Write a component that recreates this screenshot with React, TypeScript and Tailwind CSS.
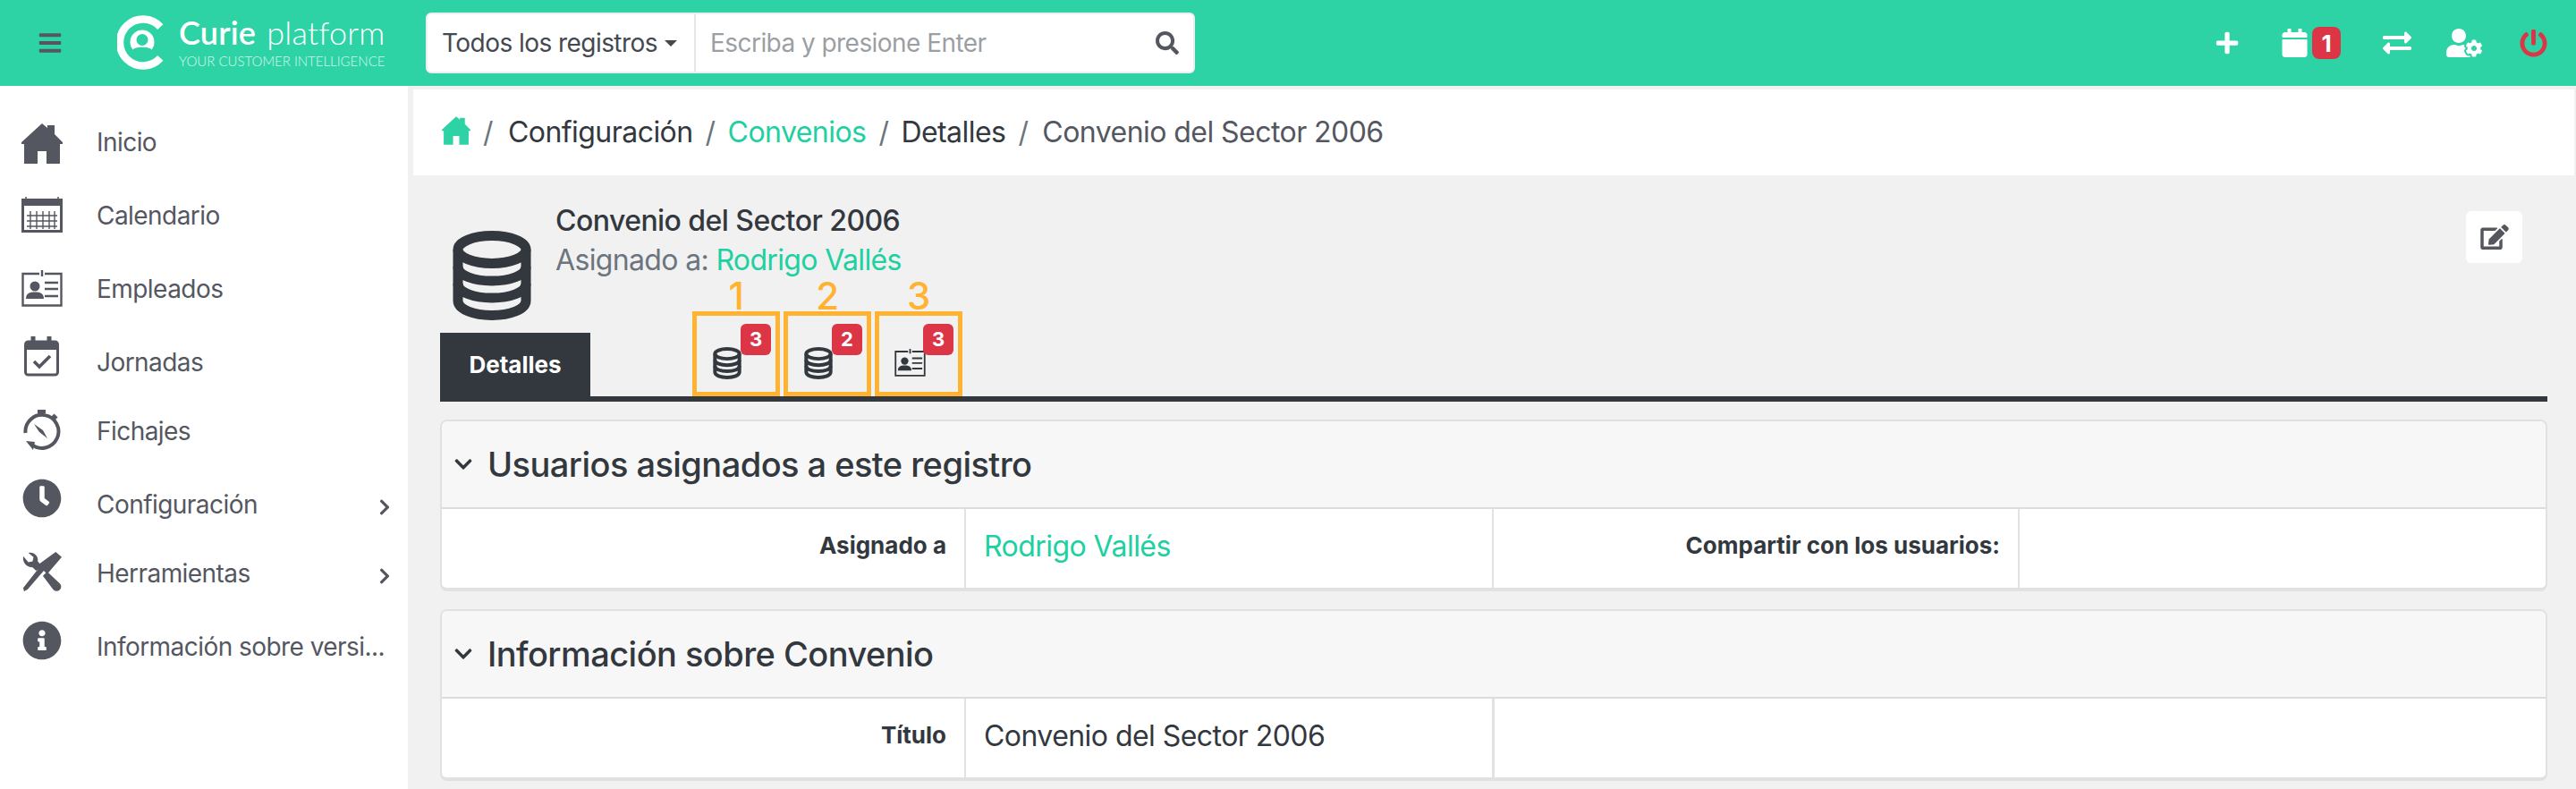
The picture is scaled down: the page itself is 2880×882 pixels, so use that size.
import { FaBars, FaChevronDown, FaChevronRight, FaClock, FaEdit, FaExchangeAlt, FaInfoCircle, FaPlus, FaPowerOff, FaSearch, FaUserCog, FaCalendar } from 'react-icons/fa'
import type { ReactNode } from 'react'

function HomeIcon({ className }: { className?: string }) {
  return (
    <svg viewBox="0 0 46 45" className={className} fill="currentColor">
      <path d="M23 0 L29 5 V2 H37 V12 L46 21 V23 H43 V45 H28 V31 H18 V45 H3 V23 H0 V21 Z" />
    </svg>
  )
}

function CalendarGridIcon({ className }: { className?: string }) {
  return (
    <svg viewBox="0 0 46 40" className={className} fill="none" stroke="currentColor">
      <rect x="1.5" y="3.5" width="43" height="35" strokeWidth="3" />
      <rect x="1" y="3" width="44" height="7" fill="currentColor" stroke="none" />
      <path d="M5 0 V4 M41 0 V4" strokeWidth="1.5" />
      <path d="M6 21 H40 M6 27 H40 M6 33 H40 M10 16 V36 M17 16 V36 M24 16 V36 M31 16 V36 M37 16 V36" strokeWidth="1.4" />
    </svg>
  )
}

function IdCardIcon({ className }: { className?: string }) {
  return (
    <svg viewBox="0 0 46 41" className={className} fill="none" stroke="currentColor">
      <path d="M20 4 H1.5 V39.5 H44.5 V4 H26" strokeWidth="2.4" />
      <path d="M23 0 V7" strokeWidth="2.4" />
      <circle cx="15" cy="18" r="5.5" fill="currentColor" stroke="none" />
      <path d="M5 32 C5 26 9 24.5 15 24.5 C21 24.5 25 26 25 32 Z" fill="currentColor" stroke="none" />
      <path d="M26 14 H41 M26 21 H41 M26 29 H41" strokeWidth="2.6" />
    </svg>
  )
}

function JornadaIcon({ className }: { className?: string }) {
  return (
    <svg viewBox="0 0 40 45" className={className} fill="none" stroke="currentColor">
      <rect x="1.5" y="6" width="36" height="37" rx="3" strokeWidth="3" />
      <path d="M1 7 H38 V15 H1 Z" fill="currentColor" stroke="none" />
      <path d="M10 0 V7 M28 0 V7" strokeWidth="5" />
      <path d="M11 28 L17 34 L29 22" strokeWidth="3.6" />
    </svg>
  )
}

function StopwatchIcon({ className }: { className?: string }) {
  return (
    <svg viewBox="0 0 42 47" className={className} fill="none" stroke="currentColor">
      <path d="M16 2 H25 M20.5 2 V6" strokeWidth="4" />
      <path d="M33 6 L37 10" strokeWidth="4.5" />
      <path d="M2.5 26 A18.5 18.5 0 1 1 9 38.5" strokeWidth="4" />
      <path d="M3 35 L13 36 L11 45 Z" fill="currentColor" stroke="none" />
      <path d="M12 16 L22 23 L27 32 L18 25 Z" fill="currentColor" stroke="none" />
    </svg>
  )
}

function ToolsIcon({ className }: { className?: string }) {
  return (
    <svg viewBox="0 0 46 46" className={className} fill="currentColor">
      <path d="M1 5 C0 13 5 18 12 18 L16 22 L23 17 L18 11 C19 5 14 0 7 1 L13 6 L12 11 L7 12 Z" />
      <path d="M39 0 L46 6 L29 26 L25 22 L6 44 L2 46 L1 42 L19 19 L17 16 Z" />
      <path d="M24 28 L29 23 L44 37 A5 5 0 0 1 36 44 Z" />
    </svg>
  )
}

function DatabaseIcon({ className }: { className?: string }) {
  return (
    <svg viewBox="0 0 88 100" className={className} fill="none" stroke="currentColor" strokeWidth="11">
      <ellipse cx="44" cy="21" rx="38" ry="15.5" />
      <path d="M6 21 V78 C6 88 24 94.5 44 94.5 C64 94.5 82 88 82 78 V21" />
      <path d="M6 40 C6 50 24 56 44 56 C64 56 82 50 82 40" />
      <path d="M6 59 C6 69 24 75 44 75 C64 75 82 69 82 59" />
    </svg>
  )
}

function CurieMark() {
  return (
    <svg viewBox="0 0 58 62" className="w-[58px] h-[62px]" fill="none">
      <path d="M48.3 13.1 A26 26 0 1 0 48.3 47.9" stroke="#fff" strokeWidth="8.5" />
      <circle cx="28" cy="30" r="13.5" fill="#fff" />
      <circle cx="28" cy="27.5" r="6.5" fill="#2dd3a5" />
      <path d="M15 45 L18 38 C21 35 35 35 38 38 L41 45 Z" fill="#2dd3a5" />
    </svg>
  )
}

function NavItem({ icon, label, className, iconClass, chevron }: { icon: ReactNode; label: string; className: string; iconClass?: string; chevron?: boolean }) {
  return (
    <div className={`h-[72px] flex items-center pl-6 pr-[19px] ${className}`}>
      <div className={`w-[46px] flex justify-center shrink-0 text-[#54575f] ${iconClass ?? ''}`}>{icon}</div>
      <span className="ml-[38px] text-[28px] text-[#54575f] whitespace-nowrap">{label}</span>
      {chevron && <FaChevronRight className="ml-auto mt-[5px] text-[#54575f] w-[14px] h-[20px]" />}
    </div>
  )
}

function TabBox({ num, count, icon }: { num: string; count: string; icon: ReactNode }) {
  return (
    <div className="relative w-[98px] h-[95px] border-[5px] border-[#ffb330]">
      <span className="absolute -top-[47px] inset-x-0 text-center text-[42px] leading-[50px] font-medium text-[#ffb330]">{num}</span>
      <div className="absolute left-[18px] top-[35px] text-[#32383e]">{icon}</div>
      <span className="absolute right-[5px] top-[9px] w-[34px] h-[35px] rounded-[6px] bg-[#dc3545] text-white text-[22px] tracking-normal font-bold flex items-center justify-center">{count}</span>
    </div>
  )
}

function Panel({ title, children }: { title: string; children: ReactNode }) {
  return (
    <div className="border-2 border-b-4 border-[#e0e1e3] rounded-lg overflow-hidden bg-white">
      <div className="h-[98px] bg-[#f7f7f7] border-b-2 border-[#dcdcdc] flex items-center pl-[13px]">
        <FaChevronDown className="w-[22px] h-[22px] text-[#32383e]" />
        <h2 className="ml-[16px] text-[38px] font-medium text-[#32383e]">{title}</h2>
      </div>
      {children}
    </div>
  )
}

function Label({ text, border }: { text: string; border?: boolean }) {
  return (
    <div className={`h-[88px] pt-[22px] pr-[20px] text-right text-[26px] font-bold leading-[38px] tracking-normal text-[#32383e] ${border ? 'border-l-2 border-[#e2e2e2]' : ''}`}>
      {text}
    </div>
  )
}

export default function App() {
  return (
    <div className="h-[882px] overflow-hidden flex flex-col bg-[#f1f1f1] tracking-[-0.55px] font-['Inter','Liberation_Sans',sans-serif]">
      <header className="h-24 shrink-0 bg-[#2dd3a5] flex items-center">
        <FaBars className="ml-[42px] w-[28px] h-[28px] text-[#54575f]" />
        <div className="ml-[61px] w-[345px] shrink-0 flex items-center">
          <CurieMark />
          <div className="ml-[11px] -mt-1 text-white">
            <div className="text-[36px] leading-[40px] tracking-[0.2px] whitespace-nowrap font-['Lato',sans-serif]">
              <span className="font-semibold">Curie</span>
              <span className="ml-3 font-light">platform</span>
            </div>
            <div className="mt-[3px] text-[15px] leading-[18px] tracking-normal whitespace-nowrap font-['Lato',sans-serif] font-light opacity-80">YOUR CUSTOMER INTELLIGENCE</div>
          </div>
        </div>
        <div className="w-[860px] h-[68px] rounded-md border-2 border-[#eceef0] bg-white flex items-center">
          <div className="w-[300px] h-full border-r-2 border-[#e6e6e6] flex items-center pl-[16px] text-[28px] text-[#444950] whitespace-nowrap">
            Todos los registros
            <span className="ml-2 w-0 h-0 border-x-[7px] border-x-transparent border-t-[7px] border-t-[#444950]" />
          </div>
          <span className="ml-[16px] text-[28px] text-[#9b9fa4]">Escriba y presione Enter</span>
          <FaSearch className="ml-auto mr-[16px] w-[26px] h-[26px] text-[#54575f]" />
        </div>
        <div className="ml-auto flex items-center text-white">
          <FaPlus className="w-[28px] h-[28px]" />
          <div className="ml-[47px] flex items-center">
            <FaCalendar className="w-[29px] h-[32px]" />
            <span className="ml-[5px] w-[32px] h-[36px] rounded-[8px] bg-[#dc3545] text-[26px] tracking-normal font-bold flex items-center justify-center">1</span>
          </div>
          <FaExchangeAlt className="ml-[47px] w-[32px] h-[32px]" />
          <FaUserCog className="ml-[39px] w-[40px] h-[32px]" />
          <FaPowerOff className="ml-[42px] mr-[32px] w-[31px] h-[31px] text-[#dc3545]" />
        </div>
      </header>

      <div className="flex-1 flex min-h-0">
        <aside className="w-[456px] shrink-0 bg-white pt-[27px]">
          <NavItem className="" iconClass="mt-[2px]" label="Inicio" icon={<HomeIcon className="w-[46px] h-[45px]" />} />
          <NavItem className="mt-[10px]" iconClass="mb-[2px]" label="Calendario" icon={<CalendarGridIcon className="w-[46px] h-[40px]" />} />
          <NavItem className="mt-[10px]" iconClass="mb-[2px]" label="Empleados" icon={<IdCardIcon className="w-[46px] h-[41px]" />} />
          <NavItem className="mt-[10px]" iconClass="mb-[14px]" label="Jornadas" icon={<JornadaIcon className="w-[40px] h-[45px]" />} />
          <NavItem className="mt-[5px]" iconClass="mb-[2px]" label="Fichajes" icon={<StopwatchIcon className="w-[42px] h-[47px]" />} />
          <NavItem className="mt-[10px]" iconClass="mb-[14px]" label="Configuración" chevron icon={<FaClock className="w-[44px] h-[44px]" />} />
          <NavItem className="mt-[5px]" iconClass="mb-[4px]" label="Herramientas" chevron icon={<ToolsIcon className="w-[44px] h-[44px]" />} />
          <NavItem className="mt-[10px]" iconClass="mb-[14px]" label="Información sobre versi..." icon={<FaInfoCircle className="w-[44px] h-[44px]" />} />
        </aside>

        <main className="flex-1 min-w-0 pt-1 pl-[6px] pr-[2px]">
          <nav className="h-24 bg-white flex items-center pl-[32px] text-[32px] whitespace-nowrap">
            <HomeIcon className="w-[32px] h-[32px] text-[#2dd3a5] -mt-1" />
            <span className="ml-[14px] mr-[17px] text-[#6c757d]">/</span>
            <span className="text-[#32383e]">Configuración</span>
            <span className="mx-[14px] text-[#6c757d]">/</span>
            <span className="text-[#20d0a0]">Convenios</span>
            <span className="mx-[14px] text-[#6c757d]">/</span>
            <span className="text-[#32383e]">Detalles</span>
            <span className="ml-[14px] mr-[16px] text-[#6c757d]">/</span>
            <span className="text-[#54575f]">Convenio del Sector 2006</span>
          </nav>

          <div className="pl-[30px] pr-[30px]">
            <div className="h-[152px] flex">
              <DatabaseIcon className="ml-[14px] mt-[62px] w-[88px] h-[100px] shrink-0 text-[#32383e]" />
              <div className="ml-[27px] pt-[30px]">
                <div className="text-[32px] leading-[42px] font-medium text-[#32383e] whitespace-nowrap">Convenio del Sector 2006</div>
                <div className="text-[32px] leading-[46px] tracking-[-0.65px] text-[#6c757d] whitespace-nowrap">
                  Asignado a: <span className="text-[#20d0a0]">Rodrigo Vallés</span>
                </div>
              </div>
              <div className="ml-auto mt-[40px] mr-[28px] w-[63px] h-[58px] rounded-md bg-white flex items-center justify-center">
                <FaEdit className="w-[32px] h-[28px] text-[#54575f]" />
              </div>
            </div>
            <div className="h-[101px] border-b-[6px] border-[#32383e] flex items-end">
              <div className="w-[168px] h-[71px] bg-[#32383e] text-white text-[26px] tracking-normal font-bold flex items-center justify-center">Detalles</div>
              <div className="ml-[114px] flex gap-[4px]">
                <TabBox num="1" count="3" icon={<DatabaseIcon className="w-[32px] h-[36px]" />} />
                <TabBox num="2" count="2" icon={<DatabaseIcon className="w-[32px] h-[36px]" />} />
                <TabBox num="3" count="3" icon={<IdCardIcon className="w-[35px] h-[31px] mt-[2px] -ml-[1px] text-[#32383e]" />} />
              </div>
            </div>

            <div className="mt-[20px]">
              <Panel title="Usuarios asignados a este registro">
                <div className="grid grid-cols-[584px_590px_588px_1fr]">
                  <Label text="Asignado a" />
                  <div className="h-[88px] pt-[20px] pl-[20px] border-l-2 border-[#e2e2e2] text-[32px] leading-[44px] text-[#20d0a0]">Rodrigo Vallés</div>
                  <Label text="Compartir con los usuarios:" border />
                  <div className="h-[88px] border-l-2 border-[#e2e2e2]" />
                </div>
              </Panel>
            </div>
            <div className="mt-[20px]">
              <Panel title="Información sobre Convenio">
                <div className="grid grid-cols-[584px_590px_1fr]">
                  <Label text="Título" />
                  <div className="h-[88px] pt-[20px] pl-[20px] border-l-2 border-[#e2e2e2] text-[32px] leading-[44px] text-[#32383e]">Convenio del Sector 2006</div>
                  <div className="h-[88px] border-l-[3px] border-[#e2e2e2]" />
                </div>
              </Panel>
            </div>
          </div>
        </main>
      </div>
    </div>
  )
}
